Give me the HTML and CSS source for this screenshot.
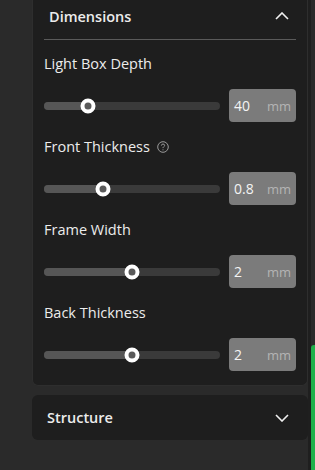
FILE: index.html
```html
<!DOCTYPE html>
<html lang="en">
<head>
    <meta charset="UTF-8">
    <meta name="viewport" content="width=device-width, initial-scale=1.0">
    <title>Light Box Settings</title>
    <link rel="stylesheet" href="styles.css">
</head>
<body>
    <div class="layout">
        <div class="sidebar">
            <div class="panel">
                <div class="panel-header">
                    <span class="panel-title">Dimensions</span>
                    <svg class="chevron" width="14" height="8" viewBox="0 0 14 8"><path d="M1 7 L7 1 L13 7" fill="none" stroke="#f0f0f0" stroke-width="1.6"/></svg>
                </div>

                <div class="field">
                    <div class="field-label">Light Box Depth</div>
                    <div class="field-row">
                        <div class="slider">
                            <div class="slider-fill" style="width: 25%"></div>
                            <div class="slider-thumb" style="left: 25%"></div>
                        </div>
                        <div class="num-box"><span class="num-value">40</span><span class="num-unit">mm</span></div>
                    </div>
                </div>

                <div class="field">
                    <div class="field-label">Front Thickness
                        <svg class="help" width="12" height="12" viewBox="0 0 12 12"><circle cx="6" cy="6" r="5.3" fill="none" stroke="#9a9a9a" stroke-width="1"/><path d="M4.4 4.6 Q4.5 3 6 3 Q7.6 3 7.6 4.5 Q7.6 5.4 6.6 5.9 Q6 6.2 6 7.1" fill="none" stroke="#9a9a9a" stroke-width="1"/><circle cx="6" cy="8.8" r="0.6" fill="#9a9a9a"/></svg>
                    </div>
                    <div class="field-row">
                        <div class="slider">
                            <div class="slider-fill" style="width: 33.5%"></div>
                            <div class="slider-thumb" style="left: 33.5%"></div>
                        </div>
                        <div class="num-box"><span class="num-value">0.8</span><span class="num-unit">mm</span></div>
                    </div>
                </div>

                <div class="field">
                    <div class="field-label">Frame Width</div>
                    <div class="field-row">
                        <div class="slider">
                            <div class="slider-fill" style="width: 50%"></div>
                            <div class="slider-thumb" style="left: 50%"></div>
                        </div>
                        <div class="num-box"><span class="num-value">2</span><span class="num-unit">mm</span></div>
                    </div>
                </div>

                <div class="field">
                    <div class="field-label">Back Thickness</div>
                    <div class="field-row">
                        <div class="slider">
                            <div class="slider-fill" style="width: 50%"></div>
                            <div class="slider-thumb" style="left: 50%"></div>
                        </div>
                        <div class="num-box"><span class="num-value">2</span><span class="num-unit">mm</span></div>
                    </div>
                </div>
            </div>

            <div class="card">
                <span class="panel-title">Structure</span>
                <svg class="chevron" width="14" height="8" viewBox="0 0 14 8"><path d="M1 1 L7 7 L13 1" fill="none" stroke="#f0f0f0" stroke-width="1.6"/></svg>
            </div>
        </div>
        <div class="divider-strip"></div>
        <div class="edge">
            <div class="edge-bar"></div>
        </div>
    </div>
</body>
</html>
```

FILE: styles.css
```css
body {
    margin: 0;
    background-color: #2a2a2a;
    font-family: 'Open Sans', 'Noto Sans', sans-serif;
    color: #ececec;
}
.layout {
    display: flex;
    height: 470px;
    padding-left: 32px;
}
.sidebar {
    width: 276px;
}
.panel {
    background: #1e1e1e;
    border: 1px solid #2e2e2e;
    border-top: none;
    border-radius: 0 0 6px 6px;
    padding: 0 11px 14px 11px;
}
.panel-header {
    display: flex;
    justify-content: space-between;
    align-items: center;
    height: 32px;
    padding: 0 7px 7px 5px;
    border-bottom: 1px solid #5a5a5a;
    margin-bottom: 14px;
}
.panel-title {
    font-size: 14.5px;
    font-weight: 600;
    color: #ececec;
}
.chevron {
    display: block;
}
.field {
    margin-bottom: 15px;
}
.field:last-child {
    margin-bottom: 0;
}
.field-label {
    font-size: 14.5px;
    line-height: 20px;
    height: 20px;
    margin-bottom: 15px;
    display: flex;
    align-items: center;
    gap: 7px;
}
.field-row {
    display: flex;
    align-items: center;
    gap: 9px;
    height: 33px;
}
.slider {
    position: relative;
    flex: 1;
    height: 8px;
    border-radius: 4px;
    background: #3a3a3a;
}
.slider-fill {
    height: 100%;
    border-radius: 4px;
    background: #565656;
}
.slider-thumb {
    position: absolute;
    top: 50%;
    width: 7px;
    height: 7px;
    border: 4px solid #ffffff;
    border-radius: 50%;
    background: #5a5a5a;
    transform: translate(-50%, -50%);
}
.num-box {
    width: 67px;
    height: 33px;
    box-sizing: border-box;
    background: #7b7b7b;
    border-radius: 4px;
    display: flex;
    align-items: center;
    justify-content: space-between;
    padding: 0 5px;
}
.num-value {
    font-size: 14px;
    color: #f4f4f4;
}
.num-unit {
    font-size: 13px;
    color: #b4b4b4;
}
.card {
    margin-top: 9px;
    height: 45px;
    background: #1e1e1e;
    border-radius: 6px;
    display: flex;
    align-items: center;
    justify-content: space-between;
    padding: 0 19px 0 15px;
}
.divider-strip {
    width: 3px;
    background: #1f1f1f;
}
.edge {
    flex: 1;
    display: flex;
    flex-direction: column;
    justify-content: flex-end;
}
.edge-bar {
    height: 125px;
    background: #1fb04a;
    border-radius: 3px 0 0 0;
}
```
